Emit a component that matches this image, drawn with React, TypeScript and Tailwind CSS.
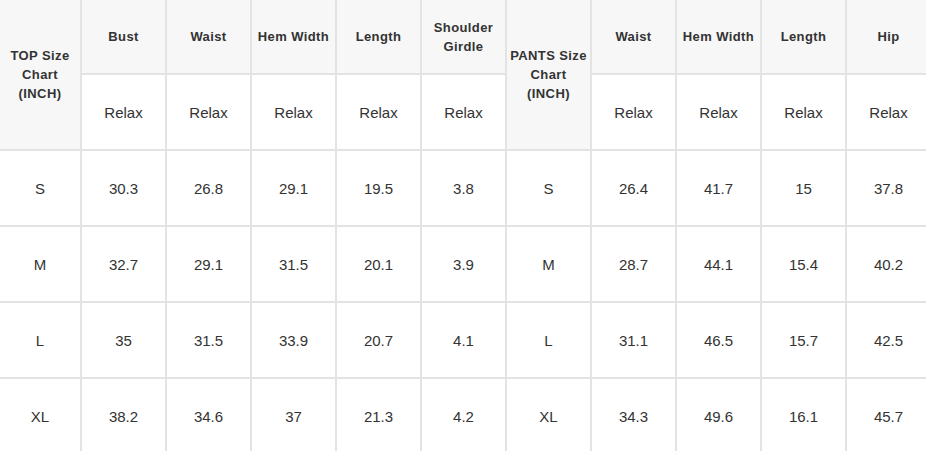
import React from "react";

const topHeads = ["Bust", "Waist", "Hem Width", "Length", "Shoulder Girdle"];
const pantsHeads = ["Waist", "Hem Width", "Length", "Hip"];
const rows = [
  ["S", "30.3", "26.8", "29.1", "19.5", "3.8", "S", "26.4", "41.7", "15", "37.8"],
  ["M", "32.7", "29.1", "31.5", "20.1", "3.9", "M", "28.7", "44.1", "15.4", "40.2"],
  ["L", "35", "31.5", "33.9", "20.7", "4.1", "L", "31.1", "46.5", "15.7", "42.5"],
  ["XL", "38.2", "34.6", "37", "21.3", "4.2", "XL", "34.3", "49.6", "16.1", "45.7"],
];

const headCls =
  "bg-[#f7f7f7] flex items-center justify-center text-center whitespace-nowrap text-[13px] leading-[19px] font-bold tracking-[0.4px] text-[#333333] [font-family:'Liberation_Sans',Arial,sans-serif]";
const cellCls =
  "bg-white flex items-center justify-center text-center pt-[2px] text-[15px] text-[#333333] [font-family:'Liberation_Sans',Arial,sans-serif]";

export default function App() {
  return (
    <div className="w-[926px] h-[451px] overflow-hidden bg-white">
      <div className="grid w-[930px] grid-cols-[80px_repeat(10,83px)] grid-rows-[73px_74px_74px_74px_74px_74px] gap-[2px] bg-[#e3e3e3]">
        <div className={`${headCls} row-span-2`}>
          TOP Size
          <br />
          Chart
          <br />
          (INCH)
        </div>
        {topHeads.map((h) => (
          <div key={"t" + h} className={headCls}>
            {h === "Shoulder Girdle" ? (
              <span>
                Shoulder
                <br />
                Girdle
              </span>
            ) : (
              h
            )}
          </div>
        ))}
        <div className={`${headCls} row-span-2`}>
          PANTS Size
          <br />
          Chart
          <br />
          (INCH)
        </div>
        {pantsHeads.map((h) => (
          <div key={"p" + h} className={headCls}>
            {h}
          </div>
        ))}
        {Array.from({ length: 9 }).map((_, i) => (
          <div key={"r" + i} className={cellCls}>
            Relax
          </div>
        ))}
        {rows.map((r, ri) =>
          r.map((v, ci) => (
            <div key={ri + "-" + ci} className={cellCls}>
              {v}
            </div>
          ))
        )}
      </div>
    </div>
  );
}
